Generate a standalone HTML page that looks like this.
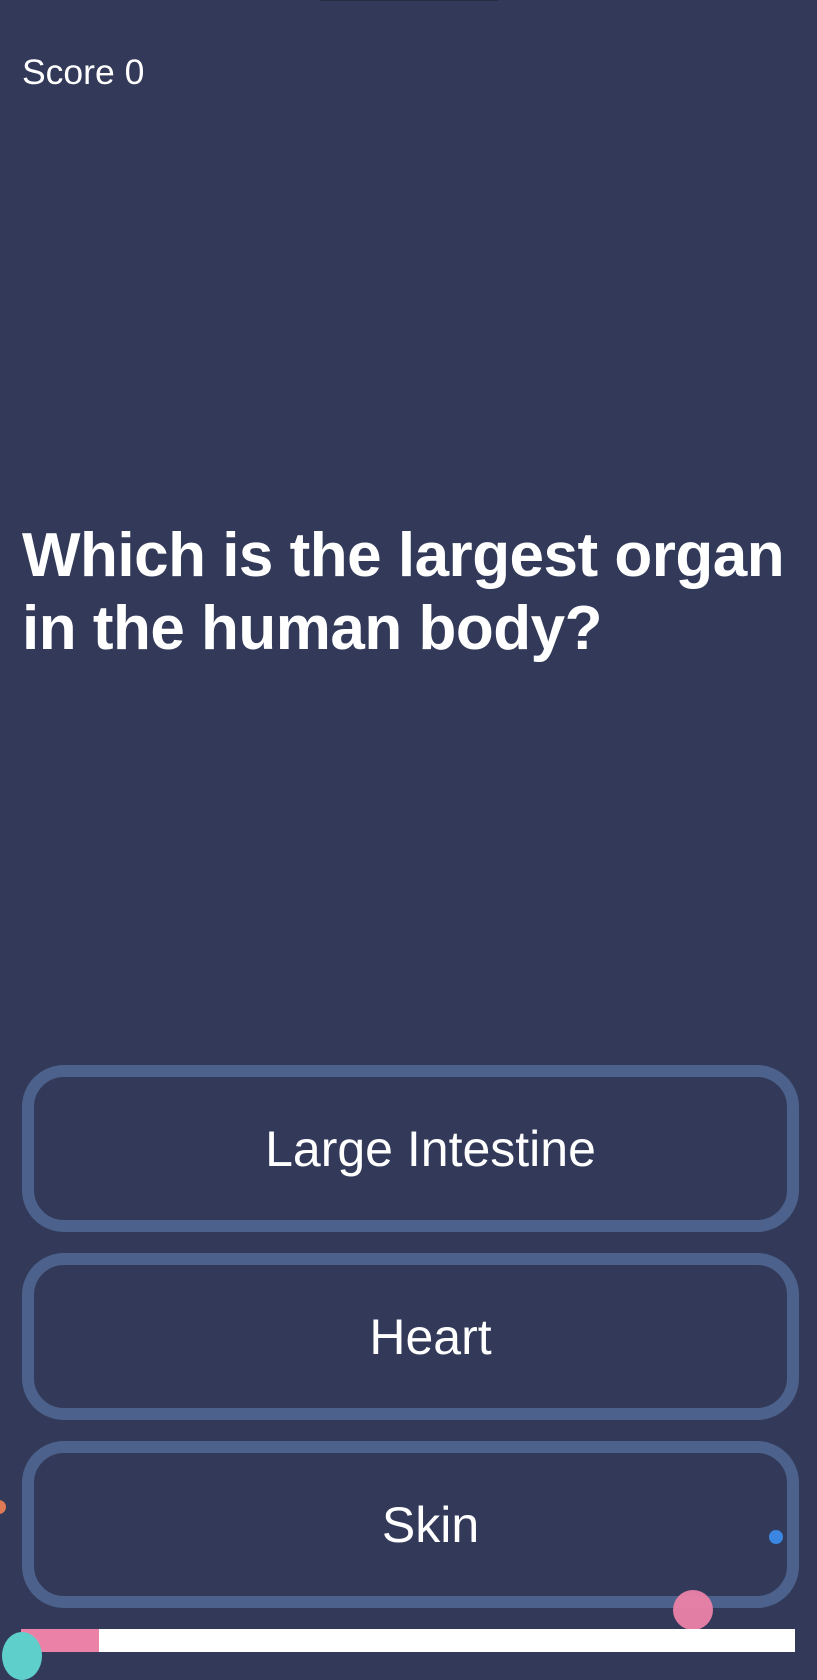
<!DOCTYPE html>
<html><head><meta charset="utf-8"><style>
html,body{margin:0;padding:0}
body{width:817px;height:1669px;background:#333a59;position:relative;overflow:hidden;font-family:"Liberation Sans",Arial,sans-serif;color:#fff}
.notch{position:absolute;left:318px;top:-6px;width:182px;height:7px;background:#262b42;border-radius:4px}
.score{position:absolute;left:22px;top:52px;font-size:35.5px}
.q{position:absolute;left:22px;top:519px;width:775px;font-size:62px;font-weight:bold;line-height:73px;letter-spacing:-0.5px}
.btn{position:absolute;left:22px;width:713px;height:143px;border:12px solid #4c618b;border-radius:42px;display:flex;align-items:center;justify-content:center;font-size:50px;padding-left:40px;box-sizing:content-box}
.bar{position:absolute;left:21px;top:1629px;width:774px;height:23px;background:#fff}
.bar div{width:78px;height:100%;background:#ec81a8}
</style></head><body>
<div class="notch"></div>
<div class="score">Score 0</div>
<div class="q">Which is the largest organ in the human body?</div>
<div class="btn" style="top:1065px">Large Intestine</div>
<div class="btn" style="top:1253px">Heart</div>
<div class="btn" style="top:1441px">Skin</div>
<div style="position:absolute;left:769px;top:1530px;width:14px;height:14px;border-radius:50%;background:#3a86e0"></div>
<div style="position:absolute;left:673px;top:1590px;width:40px;height:40px;border-radius:50%;background:#ec81a8;opacity:.95"></div>
<div style="position:absolute;left:-8px;top:1500px;width:14px;height:14px;border-radius:50%;background:#e07a55"></div>
<div class="bar"><div></div></div>
<div style="position:absolute;left:2px;top:1632px;width:40px;height:48px;border-radius:50%;background:#5ecfcb"></div>
</body></html>
